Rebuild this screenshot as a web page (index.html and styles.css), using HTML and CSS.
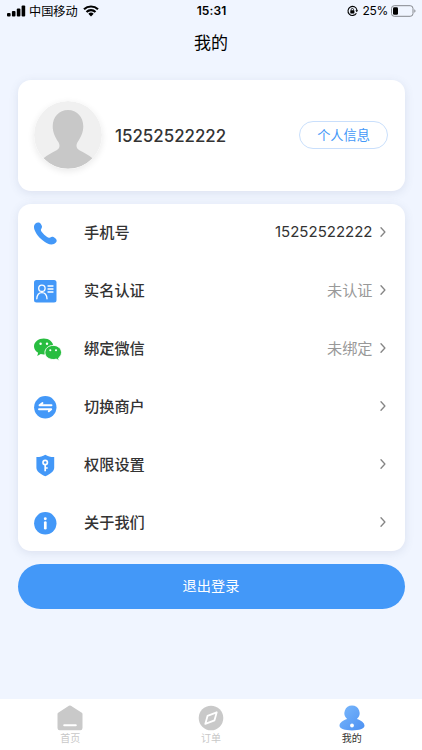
FILE: index.html
```html
<!DOCTYPE html>
<html lang="zh-CN">
<head>
<meta charset="UTF-8">
<meta name="viewport" content="width=device-width, initial-scale=1.0">
<title>我的</title>
<link rel="stylesheet" href="styles.css">
</head>
<body>
<div class="page">
  <header class="status-bar">
    <div class="status-left">
      <svg class="signal" width="19" height="12" viewBox="0 0 19 12"><rect x="0" y="8" width="3.6" height="3.5" rx="1"/><rect x="4.9" y="6" width="3.6" height="5.5" rx="1"/><rect x="9.8" y="3.4" width="3.6" height="8.1" rx="1"/><rect x="14.6" y="0.5" width="3.6" height="11" rx="1"/></svg>
      <span class="carrier">中国移动</span>
      <svg class="wifi" width="16" height="12" viewBox="0 0 16 12"><path d="M1 4.3a10.2 10.2 0 0 1 14 0M3.5 7a6.5 6.5 0 0 1 9 0" fill="none" stroke="#000" stroke-width="2.2"/><path d="M5.3 8.7a4 4 0 0 1 5.4 0L8 11.5z"/></svg>
    </div>
    <div class="time">15:31</div>
    <div class="status-right">
      <svg class="lock" width="11" height="12" viewBox="0 0 11 12"><path d="M9.4 8.2A4.5 4.5 0 1 1 9.9 5M9.9 5.2v1" fill="none" stroke="#000" stroke-width="1.1"/><path d="M8.4 5.2h2.6L9.7 7.2z"/><rect x="3.3" y="5.3" width="4.1" height="3.2" rx=".4"/><path d="M4.2 5.5V4.6a1.15 1.15 0 0 1 2.3 0v.9" fill="none" stroke="#000" stroke-width=".8"/></svg>
      <span class="percent">25%</span>
      <svg class="battery" width="25" height="12" viewBox="0 0 25 12"><rect x=".5" y=".7" width="21.5" height="10.6" rx="2.8" fill="none" stroke="#85888e"/><rect x="2" y="2.2" width="5" height="7.6" rx="1.3"/><path d="M23.3 4.2c1.6.6 1.6 3 0 3.6z" fill="#85888e"/></svg>
    </div>
  </header>
  <h1 class="title">我的</h1>

  <section class="card profile">
    <svg class="avatar" width="68" height="68" viewBox="0 0 68 68"><circle cx="34" cy="34" r="34" fill="#f0f0f0"/><path d="M34 9c9 0 15.3 7 15.3 16.3 0 6.5-2.6 11.2-5.3 15.2-2.1 3.2-2.3 6.8 1.4 8.8 4.3 2.3 9.6 4.8 13 8A34 34 0 0 1 9.6 57.3c3.4-3.2 8.7-5.7 13-8 3.7-2 3.5-5.6 1.4-8.8-2.7-4-5.3-8.7-5.3-15.2C18.7 16 25 9 34 9z" fill="#c8c8c8"/></svg>
    <div class="phone">15252522222</div>
    <button class="info-button">个人信息</button>
  </section>

  <section class="card menu">
    <div class="row">
      <div class="icon"><svg width="23" height="23" viewBox="0 0 23 23"><path d="M1.2 1.7C3 .1 5.4-.1 6.7 1.7c1.7 2.5 1.6 3.5.5 5.2-.7 1.2-.2 2 .6 3.1 1.5 2 3.3 3.7 5.3 5.1 1.2.8 2 1 3.2.3 1.6-.9 2.7-.8 4.9.8 1.7 1.2 1.9 2.9.7 4.3-1.9 2.2-5.2 2.6-8.9.7C7.3 18.3 2.6 13.2.7 8.3-.3 5.6-.4 3.2 1.2 1.7z" fill="#4398f8"/></svg></div>
      <div class="label">手机号</div>
      <div class="value number">15252522222</div>
      <svg class="arrow" width="6" height="10" viewBox="0 0 6 10"><path d="M1 .7l3.9 4.3L1 9.3"/></svg>
    </div>
    <div class="row">
      <div class="icon"><svg width="23" height="23" viewBox="0 0 23 23"><rect width="22.5" height="22.5" rx="2.5" fill="#4398f8"/><g fill="none" stroke="#fff" stroke-width="1.3" stroke-linecap="round"><circle cx="7.9" cy="8.3" r="3.2"/><path d="M2.8 18.8c.2-3.9 2-6.2 5.1-6.2s4.9 2.3 5.1 6.2M14 6h5M14 9h5M14 12h5"/></g></svg></div>
      <div class="label">实名认证</div>
      <div class="value">未认证</div>
      <svg class="arrow" width="6" height="10" viewBox="0 0 6 10"><path d="M1 .7l3.9 4.3L1 9.3"/></svg>
    </div>
    <div class="row">
      <div class="icon"><svg width="28" height="23" viewBox="0 0 28 23"><path d="M9.8.5C15 .5 19.3 3.9 19.3 8.500s-4.200 8-9.500 8c-1.100 0-2.200-.1-3.100-.4L3.300 18l.8-3.200C1.600 13.300 0 11.100 0 8.500c0-4.600 4.500-8 9.800-8z" fill="#28bd40"/><path d="M19.2 7.4c4.8 0 8.3 3.1 8.3 7.1 0 2.3-1.2 4.2-3 5.5l.7 2.7-3-1.6c-.9.3-1.900.4-3 .4-4.700 0-8.300-3.100-8.300-7s3.600-7.100 8.300-7.100z" fill="#28bd40" stroke="#fff" stroke-width=".9"/><g fill="#fff"><circle cx="6.6" cy="5.8" r="1.2"/><circle cx="13" cy="5.8" r="1.2"/><circle cx="16.3" cy="12.3" r="1.05"/><circle cx="22" cy="12.3" r="1.05"/></g></svg></div>
      <div class="label">绑定微信</div>
      <div class="value">未绑定</div>
      <svg class="arrow" width="6" height="10" viewBox="0 0 6 10"><path d="M1 .7l3.9 4.3L1 9.3"/></svg>
    </div>
    <div class="row">
      <div class="icon"><svg width="23" height="23" viewBox="0 0 23 23"><circle cx="11.3" cy="11.3" r="11.2" fill="#4398f8"/><path d="M17.5 9.2H5.500l3-2.200M5 13.300h12.200l-2.400 2" fill="none" stroke="#fff" stroke-width="1.9" stroke-linecap="round" stroke-linejoin="round"/></svg></div>
      <div class="label">切换商户</div>
      <svg class="arrow" width="6" height="10" viewBox="0 0 6 10"><path d="M1 .7l3.9 4.3L1 9.3"/></svg>
    </div>
    <div class="row">
      <div class="icon"><svg width="23" height="23" viewBox="0 0 23 23"><path d="M11.3.7c2.7 1.8 5.6 2.5 8.9 2.4v10.6c0 3.8-4 6.2-8.9 8.5-4.9-2.3-8.9-4.7-8.9-8.5V3.1c3.3.1 6.2-.6 8.9-2.4z" fill="#4398f8"/><g fill="none" stroke="#fff" stroke-width="1.7"><circle cx="11.2" cy="8.5" r="2.2"/><path d="M11.2 10.700v6.500M11.200 14h2.500"/></g></svg></div>
      <div class="label">权限设置</div>
      <svg class="arrow" width="6" height="10" viewBox="0 0 6 10"><path d="M1 .7l3.9 4.3L1 9.3"/></svg>
    </div>
    <div class="row">
      <div class="icon"><svg width="23" height="23" viewBox="0 0 23 23"><circle cx="11.3" cy="11.3" r="11.2" fill="#4398f8"/><circle cx="11.3" cy="6.7" r="1.45" fill="#fff"/><path d="M11.3 10.5v5.7" stroke="#fff" stroke-width="2.7" stroke-linecap="round"/></svg></div>
      <div class="label">关于我们</div>
      <svg class="arrow" width="6" height="10" viewBox="0 0 6 10"><path d="M1 .7l3.9 4.3L1 9.3"/></svg>
    </div>
  </section>

  <button class="logout">退出登录</button>

  <nav class="tab-bar">
    <div class="tab">
      <svg width="26" height="26" viewBox="0 0 26 26"><path d="M11.9.8q1-.7 2 0L24.8 7.7q.7.5.7 1.4v14q0 2.2-2.2 2.2H2.7q-2.2 0-2.2-2.2v-14q0-.9.7-1.4z" fill="#c9c9c9"/><path d="M7.2 20.2h11.6" stroke="#fff" stroke-width="2" stroke-linecap="round"/></svg>
      <span>首页</span>
    </div>
    <div class="tab">
      <svg width="26" height="26" viewBox="0 0 26 26"><circle cx="13" cy="13" r="12.3" fill="#c9c9c9"/><path d="M18.7 7.3l-2.2 8-9.2 3.6 2.2-8z" fill="none" stroke="#fff" stroke-width="1.8" stroke-linejoin="round"/></svg>
      <span>订单</span>
    </div>
    <div class="tab active">
      <svg width="26" height="26" viewBox="0 0 26 26"><defs><linearGradient id="user" x1="0" y1="0" x2="1" y2="1"><stop offset="0" stop-color="#7bb9fc"/><stop offset="1" stop-color="#4c90f2"/></linearGradient></defs><path d="M13 .5a7.6 7.6 0 0 1 4.9 13.4c4.3 1.3 7.6 3.8 7.6 6.7 0 3.3-5.5 4.9-12.5 4.9S.5 23.9.5 20.6c0-2.900 3.300-5.400 7.600-6.700A7.600 7.600 0 0 1 13 .5z" fill="url(#user)"/><circle cx="13" cy="20.5" r="1.9" fill="#fff"/></svg>
      <span>我的</span>
    </div>
  </nav>
</div>
</body>
</html>
```
FILE: styles.css
```css
* { box-sizing: border-box; }
body { margin: 0; background-color: #f0f5ff; color: #333; font-family: Inter, "Noto Sans CJK SC", sans-serif; }
button { font-family: inherit; padding: 0; }
svg { display: block; flex-shrink: 0; }
.page { display: flex; flex-direction: column; height: 750px; overflow: hidden; }
.status-bar { display: grid; grid-template-columns: 1fr auto 1fr; align-items: center; height: 22px; padding: 0 6px 0 7px; color: #000; font-size: 12px; line-height: 22px; }
.status-left { display: flex; align-items: center; height: 22px; }
.carrier { margin: 0 5px 0 3px; padding-top: 1px; font-size: 12.2px; line-height: 21px; }
.time { font-weight: 600; letter-spacing: 0.1px; }
.status-right { display: flex; align-items: center; justify-content: flex-end; }
.percent { margin: 0 3px 0 5px; font-size: 12px; letter-spacing: -0.3px; }
.title { height: 42px; margin: 0 0 15.5px; color: #000; font-size: 17px; font-weight: 400; line-height: 43px; text-align: center; }
.card { margin: 0 17.5px; background-color: #fff; border-radius: 13px; box-shadow: 0 2px 10px rgba(80, 95, 130, 0.13); }
.profile { display: flex; align-items: center; height: 111px; padding: 0 16.5px; }
.avatar { border-radius: 50%; box-shadow: 0 2px 7px rgba(0, 0, 0, 0.09); }
.phone { flex: 1; margin-left: 13px; padding-top: 1px; font-size: 16.9px; font-weight: 500; }
.info-button { width: 89px; height: 28px; border: 1px solid #c9dffc; border-radius: 14px; background-color: #fff; color: #4398f8; font-size: 13.2px; line-height: 27px; }
.menu { height: 347px; margin-top: 13.5px; }
.row { display: flex; align-items: center; height: 58px; padding: 0 19px 1px 16.5px; }
.icon { display: flex; width: 50px; padding-top: 1px; }
.label { flex: 1; font-size: 15.2px; font-weight: 500; line-height: 24px; }
.value { margin-right: 7px; color: #999; font-size: 15.2px; line-height: 24px; }
.number { margin-bottom: 1px; color: #333; font-size: 15px; }
.arrow { margin-bottom: 1px; fill: none; stroke: #858585; stroke-width: 1.3; stroke-linecap: round; stroke-linejoin: round; }
.logout { height: 45px; margin: 13px 17.5px 0; padding-bottom: 2px; border: 0; border-radius: 23px; background-color: #4398f8; color: #fff; font-size: 14.2px; line-height: 42px; }
.tab-bar { display: flex; height: 51px; margin-top: auto; background-color: #fff; }
.tab { display: flex; flex: 1; flex-direction: column; align-items: center; padding-top: 6px; color: #c8c8c8; font-size: 10px; line-height: 14px; }
.active { color: #333; }
```
